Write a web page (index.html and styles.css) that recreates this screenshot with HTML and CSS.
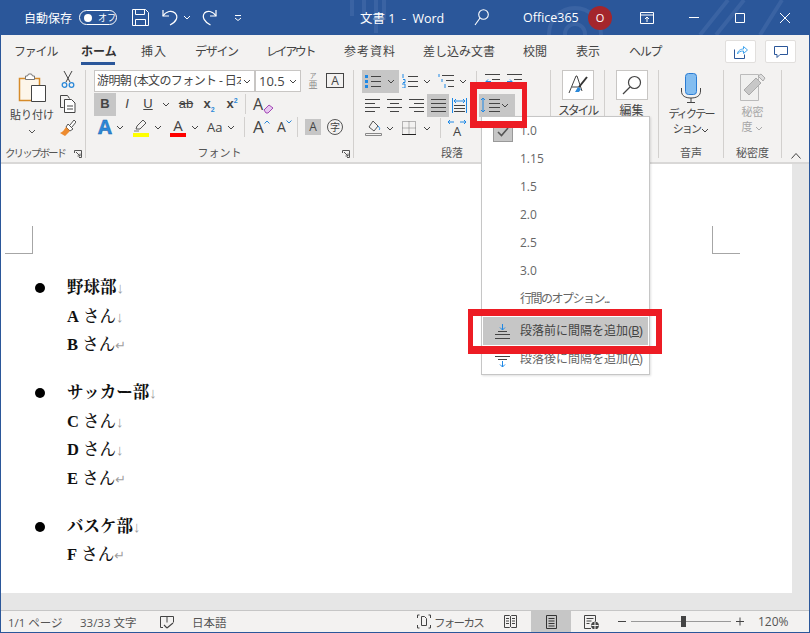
FILE: index.html
```html
<!DOCTYPE html>
<html lang="ja">
<head>
    <meta charset="utf-8">
    <title>文書 1 - Word</title>
    <link rel="stylesheet" href="styles.css">
</head>
<body>
<div class="window">
    <header class="titlebar">
        <svg class="pattern" width="810" height="35" viewBox="0 0 810 35" fill="none" stroke="#3a63a3" stroke-width="4">
            <path d="M352 0v16M364 0v24M376 0v33M384 0v20"/>
            <circle cx="575" cy="34" r="26"/>
            <circle cx="575" cy="34" r="10"/>
            <path d="M700 35l28-35M716 35l28-35M760 35l22-35"/>
        </svg>
        <span class="autosave">自動保存</span>
        <span class="toggle"><i class="knob"></i><span class="toggle-text">オフ</span></span>
        <svg class="qa-save" width="17" height="17" viewBox="0 0 17 17" fill="none" stroke="#fff" stroke-width="1"><path d="M.5.5h13l3 3v13H.5z"/><path d="M3.500.5v5h9v-5M3.500 16.500v-6h10v6"/></svg>
        <svg class="qa-undo" width="17" height="17" viewBox="0 0 17 17" fill="none" stroke="#fff" stroke-width="1.200"><path d="M1 1v6h6"/><path d="M1 7c3-5 9-6 12-3 4 4 1 9-5 12"/></svg>
        <svg class="qa-chev" width="8" height="5" viewBox="0 0 8 5" fill="none" stroke="#fff"><path d="M1 1l3 3 3-3"/></svg>
        <svg class="qa-redo" width="15" height="17" viewBox="0 0 15 17" fill="none" stroke="#fff" stroke-width="1.200"><path d="M14 1v6H8"/><path d="M14 7C11 2 5 1 2.500 4c-3 4 0 9 6 12"/></svg>
        <svg class="qa-more" width="8" height="6" viewBox="0 0 8 6" fill="none" stroke="#fff"><path d="M1 .5h6M1 3l3 2.500L7 3"/></svg>
        <span class="doc-title">文書 1&nbsp; -&nbsp; Word</span>
        <svg class="search" width="15" height="17" viewBox="0 0 15 17" fill="none" stroke="#fff" stroke-width="1.100"><circle cx="9.500" cy="5.500" r="4.800"/><path d="M6 9l-5 7"/></svg>
        <span class="account">Office365</span>
        <span class="avatar">O</span>
        <svg class="display-opt" width="14" height="12" viewBox="0 0 14 12" fill="none" stroke="#fff"><path d="M.5.5h13v11H.5zM.5 3h13M7 10V5M5 7l2-2 2 2"/></svg>
        <svg class="win-min" width="10" height="1" viewBox="0 0 10 1"><path d="M0 .5h10" stroke="#fff"/></svg>
        <svg class="win-max" width="10" height="10" viewBox="0 0 10 10" fill="none"><path d="M.5.5h9v9h-9z" stroke="#fff"/></svg>
        <svg class="win-close" width="10" height="10" viewBox="0 0 10 10" fill="none"><path d="M0 0l10 10M10 0L0 10" stroke="#fff"/></svg>
    </header>

    <nav class="tabs">
        <span class="tab">ファイル</span>
        <span class="tab active">ホーム</span>
        <span class="tab">挿入</span>
        <span class="tab">デザイン</span>
        <span class="tab">レイアウト</span>
        <span class="tab">参考資料</span>
        <span class="tab">差し込み文書</span>
        <span class="tab">校閲</span>
        <span class="tab">表示</span>
        <span class="tab">ヘルプ</span>
        <span class="tab-btn share">
            <svg width="14" height="14" viewBox="0 0 14 14" fill="none" stroke="#2b579a"><path d="M.5 4.500v9h10v-4"/><path d="M3.500 9c0-3 3-5 6-5V1.500l4 3.500-4 3.500V6c-3 0-5 1-6 3z" stroke="#41a5ee"/></svg>
        </span>
        <span class="tab-btn comment">
            <svg width="14" height="12" viewBox="0 0 14 12" fill="none" stroke="#2b579a"><path d="M.5.500h13v8H6l-3 3v-3H.5z"/></svg>
        </span>
    </nav>

    <section class="ribbon">
        <div class="group g-clip">
            <div class="g-body">
                <div class="paste">
                    <svg width="28" height="29" viewBox="0 0 28 29" fill="none">
                        <path d="M1.500 5.500h20v22h-20z" fill="#fdf6ea" stroke="#d68b2a" stroke-width="1.500"/>
                        <path d="M7.500 5V3h2l1-2h3l1 2h2v3.500h-9z" fill="#fff" stroke="#777"/>
                        <path d="M13.500 12.500h14v16h-14z" fill="#fff" stroke="#444"/>
                    </svg>
                    <span class="paste-label">貼り付け</span>
                    <svg width="8" height="5" viewBox="0 0 8 5" fill="none" stroke="#555"><path d="M1 1l3 3 3-3"/></svg>
                </div>
                <div class="clip-tools">
                    <svg width="16" height="18" viewBox="0 0 16 18" fill="none"><path d="M4 0l6 11M12 0L6 11" stroke="#444"/><circle cx="4.500" cy="14" r="2.300" stroke="#2b88d8" stroke-width="1.300"/><circle cx="11.500" cy="14" r="2.300" stroke="#2b88d8" stroke-width="1.300"/></svg>
                    <svg width="16" height="18" viewBox="0 0 16 18" fill="none" stroke="#444"><path d="M3.500 12.500h-3V.500h7l2 3"/><path d="M4.500 4.500h7l3.500 3.500v9.500H4.500z" fill="#fff"/><path d="M7 11h6M7 14h6"/></svg>
                    <svg width="16" height="18" viewBox="0 0 16 18" fill="none"><path d="M10 6l4-5 2 2-4 5" stroke="#555" fill="#fff"/><path d="M8 5l5 5-3 2-4-4z" fill="#fff" stroke="#555"/><path d="M6 8l4 4-5 5-5-3c3-1 4-3 6-6z" fill="#ed8b2f"/></svg>
                </div>
            </div>
            <div class="g-label"><span>クリップボード</span><svg class="launcher" width="8" height="8" viewBox="0 0 8 8" fill="none" stroke="#555"><path d="M.5 3V.5h7v7H5M2 2l4 4M6 3.500V6H3.500"/></svg></div>
        </div>

        <div class="group g-font">
            <div class="g-body col">
                <div class="row r1">
                    <span class="combo name"><span class="combo-text">游明朝 (本文のフォント - 日本</span><svg class="combo-chev" width="8" height="5" viewBox="0 0 8 5" fill="none" stroke="#444"><path d="M1 1l3 3 3-3"/></svg></span>
                    <span class="combo size">10.5<svg class="combo-chev" width="8" height="5" viewBox="0 0 8 5" fill="none" stroke="#444"><path d="M1 1l3 3 3-3"/></svg></span>
                    <span class="furigana"><small>ア</small><span>亜</span></span>
                    <span class="boxa">A</span>
                </div>
                <div class="row r2">
                    <span class="fmt bold on">B</span>
                    <span class="fmt ital">I</span>
                    <span class="fmt und">U</span>
                    <svg class="chev" width="8" height="5" viewBox="0 0 8 5" fill="none" stroke="#444"><path d="M1 1l3 3 3-3"/></svg>
                    <span class="fmt strike">ab</span>
                    <span class="fmt sub">x<sub>2</sub></span>
                    <span class="fmt sup">x<sup>2</sup></span>
                    <i class="vsep"></i>
                    <span class="clear">A<svg width="11" height="10" viewBox="0 0 11 10"><path d="M1 6l5-5 4 3-5 5H3z" fill="#e7c7f0" stroke="#a349b5"/></svg></span>
                </div>
                <div class="row r3">
                    <span class="effect">A</span>
                    <svg class="chev" width="8" height="5" viewBox="0 0 8 5" fill="none" stroke="#444"><path d="M1 1l3 3 3-3"/></svg>
                    <span class="mark">
                        <svg width="16" height="13" viewBox="0 0 16 13" fill="none"><path d="M3 10l1-3 6-6 3 3-6 6z" stroke="#555"/><path d="M1 12h5" stroke="#777"/></svg>
                        <i class="bar yellow"></i>
                    </span>
                    <svg class="chev" width="8" height="5" viewBox="0 0 8 5" fill="none" stroke="#444"><path d="M1 1l3 3 3-3"/></svg>
                    <span class="mark letter">A<i class="bar red"></i></span>
                    <svg class="chev" width="8" height="5" viewBox="0 0 8 5" fill="none" stroke="#444"><path d="M1 1l3 3 3-3"/></svg>
                    <span class="case">Aa</span>
                    <svg class="chev" width="8" height="5" viewBox="0 0 8 5" fill="none" stroke="#444"><path d="M1 1l3 3 3-3"/></svg>
                    <i class="vsep"></i>
                    <span class="grow">A<svg width="6" height="4" viewBox="0 0 6 4" fill="none" stroke="#2b88d8"><path d="M.5 3.500L3 1l2.500 2.500"/></svg></span>
                    <span class="grow small">A<svg width="6" height="4" viewBox="0 0 6 4" fill="none" stroke="#2b88d8"><path d="M.5.500L3 3 5.500.500"/></svg></span>
                    <i class="vsep"></i>
                    <span class="shade">A</span>
                    <span class="circled">字</span>
                </div>
            </div>
            <div class="g-label center">フォント<svg class="launcher" width="8" height="8" viewBox="0 0 8 8" fill="none" stroke="#555"><path d="M.5 3V.5h7v7H5M2 2l4 4M6 3.500V6H3.500"/></svg></div>
        </div>

        <div class="group g-para">
            <div class="g-body col">
                <div class="row p1">
                    <span class="hl list-on">
                        <svg width="16" height="14" viewBox="0 0 16 14"><path d="M0 1h3v3H0zM0 6h3v3H0zM0 11h3v3H0z" fill="#1e88e5"/><path d="M6 2.500h10M6 7.500h10M6 12.500h10" stroke="#444"/></svg>
                        <svg width="8" height="5" viewBox="0 0 8 5" fill="none" stroke="#444"><path d="M1 1l3 3 3-3"/></svg>
                    </span>
                    <svg class="ic-num" width="16" height="14" viewBox="0 0 16 14"><path d="M1 0v4M1 5.500h2v3H1M0 10h3v4H0" fill="none" stroke="#1e88e5"/><path d="M6 2.500h10M6 7.500h10M6 12.500h10" stroke="#444"/></svg>
                    <svg class="chev" width="8" height="5" viewBox="0 0 8 5" fill="none" stroke="#444"><path d="M1 1l3 3 3-3"/></svg>
                    <svg class="ic-multi" width="16" height="14" viewBox="0 0 16 14"><path d="M1 0v3M4 5v3M7 10v4" fill="none" stroke="#1e88e5"/><path d="M4 1.500h12M8 6.500h8M10 12.500h6" stroke="#444"/></svg>
                    <svg class="chev" width="8" height="5" viewBox="0 0 8 5" fill="none" stroke="#444"><path d="M1 1l3 3 3-3"/></svg>
                    <i class="vsep"></i>
                    <svg class="ic-ind" width="15" height="14" viewBox="0 0 15 14"><path d="M0 .5h15M7 5.500h8M7 9.500h8M0 13.500h15" stroke="#444"/><path d="M6 7.500H1M3 5.500l-2 2 2 2" fill="none" stroke="#1e88e5"/></svg>
                    <svg class="ic-ind2" width="15" height="14" viewBox="0 0 15 14"><path d="M0 .5h15M7 5.500h8M7 9.500h8M0 13.500h15" stroke="#444"/><path d="M0 7.500h5M3 5.500l2 2-2 2" fill="none" stroke="#1e88e5"/></svg>
                </div>
                <div class="row p2">
                    <svg class="al" width="15" height="14" viewBox="0 0 15 14" stroke="#444"><path d="M0 1.500h15M0 5.500h10M0 9.500h15M0 13.500h10"/></svg>
                    <svg class="al" width="15" height="14" viewBox="0 0 15 14" stroke="#444"><path d="M0 1.500h15M3 5.500h9M0 9.500h15M3 13.500h9"/></svg>
                    <svg class="al" width="15" height="14" viewBox="0 0 15 14" stroke="#444"><path d="M0 1.500h15M5 5.500h10M0 9.500h15M5 13.500h10"/></svg>
                    <span class="hl just"><svg width="15" height="14" viewBox="0 0 15 14" stroke="#444"><path d="M0 1.500h15M0 5.500h15M0 9.500h15M0 13.500h15"/></svg></span>
                    <svg class="al dist" width="15" height="15" viewBox="0 0 15 15" fill="none"><path d="M.5 0v15M14.500 0v15" stroke="#1e88e5"/><path d="M2 3h11M4 1l-2 2 2 2M11 1l2 2-2 2" stroke="#1e88e5"/><path d="M2 7.500h11M2 10.500h11M2 13.500h11" stroke="#444"/></svg>
                    <span class="hl spacing">
                        <svg width="20" height="14" viewBox="0 0 20 14" fill="none"><path d="M3 0v14M1 2l2-2 2 2M1 12l2 2 2-2" stroke="#1e88e5"/><path d="M9 1.500h11M9 5.500h11M9 9.500h11M9 13.500h11" stroke="#444"/></svg>
                        <svg width="8" height="5" viewBox="0 0 8 5" fill="none" stroke="#444"><path d="M1 1l3 3 3-3"/></svg>
                    </span>
                </div>
                <div class="row p3">
                    <svg class="ic-fill" width="17" height="16" viewBox="0 0 17 16" fill="none"><path d="M8 1l5 5-4 5-5-4z" stroke="#555"/><path d="M13 6c2 2 2 3 1 4" stroke="#1e88e5"/><path d="M.5 13.500h16v2H.5z" stroke="#888"/></svg>
                    <svg class="chev" width="8" height="5" viewBox="0 0 8 5" fill="none" stroke="#444"><path d="M1 1l3 3 3-3"/></svg>
                    <svg class="ic-border" width="14" height="14" viewBox="0 0 14 14" fill="none"><path d="M.5.500h13v13H.5zM7 .5v13M.5 7h13" stroke="#777" stroke-dasharray="1 1"/><path d="M0 13.500h14" stroke="#222"/></svg>
                    <svg class="chev" width="8" height="5" viewBox="0 0 8 5" fill="none" stroke="#444"><path d="M1 1l3 3 3-3"/></svg>
                    <i class="vsep"></i>
                    <span class="charspace">
                        <svg width="18" height="6" viewBox="0 0 18 6" fill="none" stroke="#1e88e5"><path d="M0 3h6M2 1L0 3l2 2M12 3h6M16 1l2 2-2 2"/></svg>
                        <b>A</b>
                    </span>
                </div>
            </div>
            <div class="g-label center">段落</div>
        </div>

        <div class="group g-big g-style">
            <div class="g-body big">
                <span class="bigbox"><svg width="20" height="22" viewBox="0 0 20 22" fill="none"><path d="M1 19L8 2h1l5 15" stroke="#444"/><path d="M4 13h8" stroke="#444"/><path d="M19 3L11 13" stroke="#333" stroke-width="2"/><path d="M7 18l3-5 3 2-2 3z" fill="#2b88d8"/></svg></span>
                <span class="biglabel tight">スタイル</span>
            </div>
        </div>
        <div class="group g-big g-edit">
            <div class="g-body big">
                <span class="bigbox"><svg width="20" height="20" viewBox="0 0 20 20" fill="none" stroke="#444" stroke-width="1.200"><circle cx="12.500" cy="7.500" r="6"/><path d="M8 12l-7 7"/></svg></span>
                <span class="biglabel">編集</span>
            </div>
        </div>
        <div class="group g-big g-voice">
            <div class="g-body big">
                <svg class="mic" width="20" height="30" viewBox="0 0 20 30" fill="none"><rect x="4.500" y=".5" width="11" height="21" rx="3" fill="#83bdf0" stroke="#2b7cd3"/><path d="M.5 15v3c0 5 4 7 9.500 7s9.500-2 9.500-7v-3M10 25v4M6 29.500h8" stroke="#444"/></svg>
                <span class="biglabel two tight">ディクテー<br>ション <svg width="8" height="5" viewBox="0 0 8 5" fill="none" stroke="#444"><path d="M1 1l3 3 3-3"/></svg></span>
            </div>
            <div class="g-label center">音声</div>
        </div>
        <div class="group g-big g-sens">
            <div class="g-body big">
                <svg class="tag" width="26" height="28" viewBox="0 0 26 28" fill="none"><path d="M.5 1.500h18v26H.5z" fill="#f0f0ef" stroke="#bbb"/><path d="M4 17L16 5l5 5L9 22z" fill="#c8c8c8" stroke="#aaa"/><path d="M18 3l3-2 4 4-2 3z" fill="#ddd" stroke="#aaa"/></svg>
                <span class="biglabel two off">秘密<br>度 <svg width="8" height="5" viewBox="0 0 8 5" fill="none" stroke="#aaa"><path d="M1 1l3 3 3-3"/></svg></span>
            </div>
            <div class="g-label center">秘密度</div>
        </div>
        <svg class="collapse" width="10" height="6" viewBox="0 0 10 6" fill="none" stroke="#444"><path d="M.5 5.500l4.500-5 4.500 5"/></svg>
    </section>

    <main class="doc">
        <div class="page">
            <i class="crop left"></i>
            <i class="crop right"></i>
            <ul class="club">
                <li>
                    <div class="line"><strong>野球部</strong><em>↓</em></div>
                    <div class="line"><b>A</b> さん<em>↓</em></div>
                    <div class="line"><b>B</b> さん<em class="ret">↵</em></div>
                </li>
                <li>
                    <div class="line"><strong>サッカー部</strong><em>↓</em></div>
                    <div class="line"><b>C</b> さん<em>↓</em></div>
                    <div class="line"><b>D</b> さん<em>↓</em></div>
                    <div class="line"><b>E</b> さん<em class="ret">↵</em></div>
                </li>
                <li>
                    <div class="line"><strong>バスケ部</strong><em>↓</em></div>
                    <div class="line"><b>F</b> さん<em class="ret">↵</em></div>
                </li>
            </ul>
        </div>
    </main>

    <footer class="status">
        <span class="st-pages">1/1 ページ</span>
        <span class="st-words">33/33 文字</span>
        <svg class="st-book" width="14" height="14" viewBox="0 0 14 14" fill="none" stroke="#444"><path d="M3 12.500H.5v-11H7v6M7 1.500h6.500v6"/><path d="M7 13l-3-3M7 13l6-5" stroke-width="1.100"/></svg>
        <span class="st-lang">日本語</span>
        <svg class="st-focus" width="14" height="15" viewBox="0 0 14 15" fill="none" stroke="#444"><path d="M.5 4V1h2M.5 11v3h2M11.500 1h2v3M11.500 14h2v-3"/><path d="M4.500 2.500h3l2 2v7h-5z"/></svg>
        <span class="st-focus-text">フォーカス</span>
        <svg class="st-read" width="13" height="13" viewBox="0 0 13 13" fill="none" stroke="#444"><path d="M.5.500h5l1 1 1-1h5v12h-5l-1-1-1 1h-5zM6.500 1.500v10M2 3.500h3M2 6h3M2 8.500h3M8 3.500h3M8 6h3M8 8.500h3"/></svg>
        <span class="st-print"><svg width="11" height="14" viewBox="0 0 11 14" fill="none" stroke="#333"><path d="M.5.500h10v13H.5zM2.500 3.500h6M2.500 6h6M2.500 8.500h6M2.500 11h6"/></svg></span>
        <svg class="st-web" width="15" height="14" viewBox="0 0 15 14" fill="none" stroke="#444"><path d="M7 13.500H.5V.5h11v6M2.500 3.500h7M2.500 6h5M2.500 8.500h3"/><circle cx="11" cy="10.500" r="3.500" fill="#444"/><path d="M7.500 10.500h7M11 7v7" stroke="#f3f2f1"/></svg>
        <svg class="st-minus" width="8" height="1" viewBox="0 0 8 1"><path d="M0 .5h8" stroke="#444"/></svg>
        <span class="slider"><i class="thumb"></i></span>
        <svg class="st-plus" width="8" height="9" viewBox="0 0 8 9"><path d="M0 4.500h8M4 .5v8" stroke="#444"/></svg>
        <span class="st-zoom">120%</span>
    </footer>

    <div class="menu">
        <div class="menu-item"><span class="check"><svg width="12" height="10" viewBox="0 0 12 10" fill="none" stroke="#555" stroke-width="1.600"><path d="M1 5l3.500 3.500L11 1"/></svg></span>1.0</div>
        <div class="menu-item">1.15</div>
        <div class="menu-item">1.5</div>
        <div class="menu-item">2.0</div>
        <div class="menu-item">2.5</div>
        <div class="menu-item">3.0</div>
        <div class="menu-item options">行間のオプション...</div>
        <div class="menu-item sel">
            <svg class="mi-ic" width="17" height="15" viewBox="0 0 17 15" fill="none"><path d="M8.500 0v6M6 3.500l2.500 2.500L11 3.500" stroke="#1e88e5"/><path d="M4 7.500h9M1 10.500h15M1 14.500h15" stroke="#444"/></svg>
            段落前に間隔を追加<span class="accel">(<u>B</u>)</span>
        </div>
        <div class="menu-item">
            <svg class="mi-ic" width="17" height="15" viewBox="0 0 17 15" fill="none"><path d="M1 .5h15M1 4.500h15M4 7.500h9" stroke="#444"/><path d="M8.500 9v6M6 12.500l2.500 2.500 2.500-2.500" stroke="#1e88e5"/></svg>
            段落後に間隔を追加<span class="accel">(<u>A</u>)</span>
        </div>
    </div>

    <i class="callout c-spacing"></i>
    <i class="callout c-before"></i>
</div>
</body>
</html>
```

FILE: styles.css
```css
* {
    box-sizing: border-box;
}
html, body {
    margin: 0;
    padding: 0;
}
body {
    font-family: "Open Sans", "Noto Sans CJK JP", sans-serif;
    font-size: 12px;
    color: #444;
    overflow: hidden;
}
i, em {
    font-style: normal;
}
svg {
    display: block;
    flex: none;
}
.window {
    position: relative;
    width: 810px;
    height: 633px;
    display: flex;
    flex-direction: column;
    border: 1px solid #2b579a;
    border-top: 0;
    background: #f3f2f1;
    overflow: hidden;
}

/* title bar */
.titlebar {
    position: relative;
    flex: none;
    height: 35px;
    margin: 0 -1px;
    padding-left: 24px;
    display: flex;
    align-items: center;
    background: #2b579a;
    color: #fff;
}
.pattern {
    position: absolute;
    left: 0;
    top: 0;
}
.titlebar > *:not(.pattern) {
    position: relative;
}
.autosave {
    width: 48px;
    white-space: nowrap;
}
.toggle {
    width: 38px;
    height: 15px;
    margin-left: 7px;
    display: flex;
    align-items: center;
    padding-left: 4px;
    border: 1px solid #fff;
    border-radius: 8px;
}
.knob {
    width: 8px;
    height: 8px;
    border-radius: 50%;
    background: #fff;
}
.toggle-text {
    margin-left: 6px;
    font-size: 9px;
    line-height: 13px;
    white-space: nowrap;
}
.qa-save { margin-left: 15px; }
.qa-undo { margin-left: 13px; }
.qa-chev { margin-left: 4px; }
.qa-redo { margin-left: 11px; }
.qa-more { margin-left: 17px; }
.doc-title {
    width: 92px;
    margin-left: 118px;
    font-size: 12.500px;
    white-space: nowrap;
}
.search { margin-left: 22px; }
.account {
    width: 55px;
    margin-left: 34px;
    font-size: 12.500px;
    white-space: nowrap;
}
.avatar {
    width: 24px;
    height: 24px;
    margin-left: 10px;
    border-radius: 50%;
    background: #a4262c;
    text-align: center;
    line-height: 24px;
    font-size: 11px;
}
.display-opt { margin-left: 28px; }
.win-min { margin-left: 35px; }
.win-max { margin-left: 36px; }
.win-close { margin-left: 35px; }

/* tabs */
.tabs {
    flex: none;
    height: 33px;
    display: flex;
    align-items: center;
    position: relative;
    white-space: nowrap;
    color: #444;
    font-size: 12px;
}
.tab {
    display: block;
    line-height: 18px;
}
.tab:nth-child(1) { margin-left: 13px; width: 38px; letter-spacing: -1.200px; }
.tab:nth-child(2) { margin-left: 29px; width: 34px; }
.tab:nth-child(3) { margin-left: 26px; width: 26px; letter-spacing: 1px; }
.tab:nth-child(4) { margin-left: 28px; width: 41px; letter-spacing: -1.300px; }
.tab:nth-child(5) { margin-left: 30px; width: 48px; letter-spacing: -2.400px; }
.tab:nth-child(6) { margin-left: 30px; width: 52px; letter-spacing: 1px; }
.tab:nth-child(7) { margin-left: 27px; width: 73px; }
.tab:nth-child(8) { margin-left: 27px; width: 25px; }
.tab:nth-child(9) { margin-left: 28px; width: 26px; }
.tab:nth-child(10) { margin-left: 27px; width: 32px; letter-spacing: -1.200px; }
.tab.active {
    position: relative;
    font-weight: 700;
    color: #333;
}
.tab.active::after {
    content: "";
    position: absolute;
    left: 0;
    right: 0;
    bottom: -4px;
    height: 3px;
    background: #2b579a;
}
.tab-btn {
    width: 31px;
    height: 23px;
    display: flex;
    align-items: center;
    justify-content: center;
    background: #fff;
    border: 1px solid #e1dfdd;
    border-radius: 2px;
}
.share { margin-left: 64px; }
.comment { margin-left: 9px; }

/* ribbon */
.ribbon {
    position: relative;
    flex: none;
    height: 96px;
    display: flex;
    padding-top: 1px;
    border-bottom: 2px solid #d9d8d7;
}
.group {
    height: 92px;
    position: relative;
    display: flex;
    flex-direction: column;
    padding-right: 1px;
}
.group::after {
    content: "";
    position: absolute;
    right: 0;
    top: 1px;
    bottom: 3px;
    width: 1px;
    background: #d2d0ce;
}
.g-clip { width: 85px; }
.g-font { width: 268px; }
.g-para { width: 197px; }
.g-style, .g-edit { width: 54px; }
.g-voice { width: 65px; }
.g-sens { width: 58px; }
.g-body {
    flex: 1;
    display: flex;
    min-height: 0;
}
.g-label {
    flex: none;
    height: 16px;
    line-height: 16px;
    font-size: 11px;
    color: #555;
    position: relative;
    white-space: nowrap;
}
.g-label.center {
    text-align: center;
}
.g-clip .g-label {
    padding-left: 4px;
    font-size: 10.500px;
    letter-spacing: -1.900px;
}
.launcher {
    position: absolute;
    right: 3px;
    top: 5px;
}
.paste {
    width: 56px;
    margin-left: 3px;
    display: flex;
    flex-direction: column;
    align-items: center;
}
.paste > svg:first-child {
    margin-top: 4px;
}
.paste-label {
    margin-top: 5px;
    line-height: 16px;
    font-size: 11px;
    white-space: nowrap;
}
.paste > svg:last-child {
    margin-top: 6px;
}
.clip-tools {
    display: flex;
    flex-direction: column;
    gap: 6px;
    padding-top: 2px;
}
.col {
    flex-direction: column;
}
.row {
    display: flex;
    align-items: center;
    flex: none;
}
.vsep {
    flex: none;
    width: 1px;
    height: 20px;
    background: #d2d0ce;
}

/* font group */
.g-font .g-body {
    padding-left: 8px;
}
.r1 {
    height: 23px;
}
.combo {
    position: relative;
    height: 22px;
    display: block;
    background: #fff;
    border: 1px solid #c8c6c4;
    line-height: 20px;
    padding-left: 2px;
    white-space: nowrap;
    font-size: 12px;
}
.combo.name {
    width: 161px;
}
.combo-text {
    display: block;
    width: 144px;
    overflow: hidden;
    letter-spacing: -.6px;
}
.combo.size {
    width: 46px;
    font-size: 13px;
    padding-left: 3px;
}
.combo-chev {
    position: absolute;
    right: 3px;
    top: 8px;
}
.furigana {
    width: 14px;
    margin-left: 5px;
    display: flex;
    flex-direction: column;
    align-items: center;
    font-size: 9px;
    line-height: 10px;
    color: #888;
}
.furigana small {
    display: block;
    font-size: 7px;
    line-height: 8px;
}
.boxa {
    width: 18px;
    height: 15px;
    margin-left: 6px;
    border: 1px solid #444;
    text-align: center;
    line-height: 13px;
    font-size: 12px;
}
.r2 {
    height: 24px;
}
.fmt {
    display: block;
    flex: none;
    text-align: center;
    font-family: "Liberation Sans", sans-serif;
    font-size: 13px;
    line-height: 22px;
}
.fmt.bold {
    width: 22px;
    height: 23px;
    font-weight: 700;
}
.on, .hl {
    background: #c6c6c6;
}
.fmt.ital {
    width: 22px;
    font-style: italic;
}
.fmt.und {
    width: 20px;
    text-decoration: underline;
}
.fmt.und + .chev {
    margin-left: 4px;
}
.fmt.strike {
    width: 24px;
    margin-left: 4px;
    text-decoration: line-through;
}
.fmt.sub {
    width: 22px;
    font-weight: 700;
}
.fmt.sup {
    width: 24px;
    font-weight: 700;
}
.fmt sub, .fmt sup {
    font-size: 7px;
    line-height: 0;
    color: #2b88d8;
}
.r2 .vsep {
    margin-left: 1px;
}
.clear {
    position: relative;
    width: 22px;
    margin-left: 7px;
    font-size: 16px;
    line-height: 22px;
    display: block;
}
.clear svg {
    position: absolute;
    left: 10px;
    top: 11px;
}
.r3 {
    height: 22px;
}
.effect {
    width: 18px;
    margin-left: 2px;
    text-align: center;
    font-size: 20px;
    line-height: 22px;
    font-weight: 700;
    color: #2b88d8;
    -webkit-text-stroke: .4px #1a5fa8;
}
.effect + .chev {
    margin-left: 2px;
}
.mark {
    width: 16px;
    margin-left: 9px;
    display: block;
    position: relative;
    height: 21px;
}
.mark + .chev {
    margin-left: 5px;
}
.mark svg {
    margin-top: 2px;
}
.bar {
    position: absolute;
    left: 0;
    bottom: 1px;
    width: 16px;
    height: 4px;
}
.yellow { background: #ffff00; }
.red { background: #f00; }
.mark.letter {
    margin-left: 8px;
    text-align: center;
    font-size: 15px;
    line-height: 17px;
}
.case {
    width: 18px;
    margin-left: 8px;
    font-size: 13px;
    white-space: nowrap;
}
.case + .chev {
    margin-left: 2px;
}
.r3 .vsep {
    margin-left: 9px;
}
.grow {
    display: flex;
    align-items: flex-start;
    width: 20px;
    margin-left: 8px;
    font-size: 17px;
    line-height: 20px;
}
.grow svg {
    margin-top: 3px;
}
.grow.small {
    width: 15px;
    font-size: 14px;
    margin-left: 4px;
    margin-right: 5px;
}
.grow.small + .vsep {
    margin-left: 0;
}
.shade {
    width: 16px;
    height: 16px;
    margin-left: 7px;
    background: #c6c6c6;
    text-align: center;
    line-height: 16px;
    font-size: 12px;
}
.circled {
    width: 16px;
    height: 16px;
    margin-left: 6px;
    border: 1px solid #555;
    border-radius: 50%;
    font-size: 10px;
    line-height: 14px;
    text-align: center;
}

/* paragraph group */
.g-para .g-body {
    padding-left: 8px;
}
.p1 {
    height: 24px;
}
.list-on {
    width: 37px;
    height: 23px;
    display: flex;
    align-items: center;
    gap: 6px;
    padding-left: 3px;
}
.ic-num { margin-left: 3px; }
.p1 .chev { margin-left: 5px; }
.ic-multi { margin-left: 7px; }
.p1 .vsep { margin-left: 9px; }
.ic-ind { margin-left: 8px; }
.ic-ind2 { margin-left: 7px; }
.p2 {
    height: 24px;
}
.al {
    margin-left: 7px;
}
.al:first-child {
    margin-left: 3px;
}
.just {
    width: 22px;
    height: 23px;
    margin-left: 3px;
    display: flex;
    align-items: center;
    justify-content: center;
}
.al.dist {
    margin-left: 3px;
}
.spacing {
    width: 36px;
    height: 23px;
    margin-left: 12px;
    display: flex;
    align-items: center;
    gap: 1px;
    padding-left: 1px;
}
.p3 {
    height: 22px;
}
.ic-fill { margin-left: 3px; }
.p3 .chev { margin-left: 4px; }
.ic-border { margin-left: 8px; }
.p3 .ic-border + .chev { margin-left: 7px; }
.p3 .vsep { margin-left: 9px; }
.charspace {
    width: 18px;
    margin-left: 7px;
    display: flex;
    flex-direction: column;
    align-items: center;
}
.charspace b {
    font-size: 13px;
    line-height: 13px;
    font-weight: 400;
}

/* big buttons */
.g-big .big {
    flex-direction: column;
    align-items: center;
}
.bigbox {
    width: 32px;
    height: 30px;
    margin-top: 1px;
    display: flex;
    align-items: center;
    justify-content: center;
    background: #fff;
    border: 1px solid #c8c6c4;
}
.biglabel {
    margin-top: 3px;
    line-height: 16px;
    font-size: 12px;
    text-align: center;
    white-space: nowrap;
}
.biglabel.tight {
    letter-spacing: -2.200px;
}
.biglabel svg {
    display: inline-block;
    vertical-align: middle;
}
.mic {
    margin-top: 4px;
}
.biglabel.two {
    margin-top: 3px;
    font-size: 11px;
    line-height: 15px;
}
.biglabel.two.tight {
    letter-spacing: -1.800px;
}
.tag {
    margin-top: 4px;
}
.off {
    color: #a6a6a6;
}
.collapse {
    position: absolute;
    left: 790px;
    top: 85px;
}

/* document */
.doc {
    flex: 1;
    min-height: 0;
    display: flex;
    background: #e6e6e6;
    padding-right: 17px;
    padding-bottom: 17px;
    border-bottom: 1px solid #c6c6c6;
}
.page {
    position: relative;
    flex: 1;
    background: #fff;
    overflow: hidden;
}
.crop {
    position: absolute;
    top: 62px;
    width: 28px;
    height: 28px;
    border-bottom: 1px solid #a6a6a6;
}
.crop.left {
    left: 4px;
    border-right: 1px solid #a6a6a6;
}
.crop.right {
    left: 711px;
    border-left: 1px solid #a6a6a6;
}
.club {
    margin: 0;
    padding: 110px 0 0 66px;
    list-style: none;
    font-family: "Liberation Serif", "Noto Serif CJK JP", "Noto Sans CJK JP", serif;
    font-size: 16.500px;
    color: #111;
    font-weight: 500;
}
.club li {
    position: relative;
    margin-bottom: 19.500px;
}
.line {
    height: 28.500px;
    line-height: 28.500px;
    white-space: nowrap;
}
.club li::before {
    content: "";
    position: absolute;
    left: -32px;
    top: 9px;
    width: 10px;
    height: 10px;
    border-radius: 50%;
    background: #000;
}
.club strong {
    font-weight: 700;
}
.club em {
    font-family: "Liberation Sans", sans-serif;
    font-size: 15px;
    font-weight: 400;
    color: #a0a0a0;
}
.club em.ret {
    font-family: "DejaVu Sans", sans-serif;
    font-size: 13px;
}

/* status bar */
.status {
    flex: none;
    height: 21px;
    display: flex;
    align-items: center;
    white-space: nowrap;
    font-size: 11.500px;
    color: #555;
}
.st-pages { width: 53px; margin-left: 7px; }
.st-words { width: 61px; margin-left: 19px; }
.st-book { margin-left: 19px; }
.st-lang { width: 36px; margin-left: 18px; }
.st-focus { margin-left: 189px; }
.st-focus-text { width: 44px; margin-left: 3px; letter-spacing: -1.700px; }
.st-read { margin-left: 26px; }
.st-print {
    width: 40px;
    height: 21px;
    margin-left: 14px;
    display: flex;
    align-items: center;
    justify-content: center;
    background: #c6c6c6;
}
.st-web { margin-left: 13px; }
.st-minus { margin-left: 19px; }
.slider {
    position: relative;
    width: 100px;
    height: 1px;
    margin-left: 5px;
    background: #999;
}
.thumb {
    position: absolute;
    left: 50px;
    top: -5px;
    width: 5px;
    height: 11px;
    background: #444;
}
.st-plus { margin-left: 5px; }
.st-zoom { margin-left: 14px; font-size: 12px; }

/* line spacing menu */
.menu {
    position: absolute;
    left: 480px;
    top: 116px;
    width: 169px;
    height: 259px;
    padding: 0 1px;
    background: #fff;
    border: 1px solid #c6c6c6;
    box-shadow: 1px 1px 2px rgba(0, 0, 0, .12);
}
.menu-item {
    position: relative;
    height: 28px;
    padding-left: 37px;
    line-height: 28px;
    font-size: 12px;
    color: #666;
    white-space: nowrap;
}
.menu-item.options {
    letter-spacing: -1.500px;
}
.accel {
    font-family: "Liberation Sans", sans-serif;
    letter-spacing: -.5px;
}
.menu-item.sel {
    margin-top: 4px;
    background: #c6c6c6;
    color: #444;
}
.check {
    position: absolute;
    left: 10px;
    top: 5px;
    width: 20px;
    height: 20px;
    display: flex;
    align-items: center;
    justify-content: center;
    background: #c6c6c6;
    border: 1px solid #999;
}
.mi-ic {
    position: absolute;
    left: 11px;
    top: 7px;
}
.callout {
    position: absolute;
    border: solid #ed1c24;
}
.c-spacing {
    left: 469px;
    top: 82px;
    width: 57px;
    height: 46px;
    border-width: 7px 5px 7px 7px;
}
.c-before {
    left: 467px;
    top: 309px;
    width: 194px;
    height: 45px;
    border-width: 7px 6px 8px 5px;
}
```
